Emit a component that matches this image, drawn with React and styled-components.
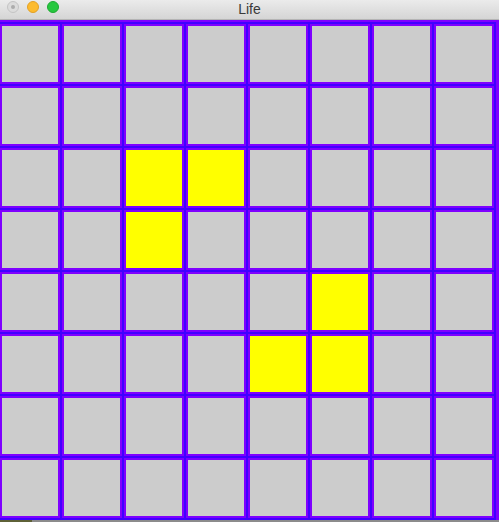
import React from 'react';
import styled, { createGlobalStyle } from 'styled-components';

const GlobalStyle = createGlobalStyle`
  html, body {
    margin: 0;
    padding: 0;
    background: #7f00ff;
    overflow: hidden;
  }
`;

const Window = styled.div`
  width: 499px;
  height: 522px;
  display: flex;
  flex-direction: column;
  background: #7f00ff;
  font-family: "Liberation Sans", Arial, sans-serif;
`;

const TitleBar = styled.div`
  height: 19px;
  flex: none;
  position: relative;
  display: flex;
  align-items: center;
  justify-content: center;
  background: linear-gradient(#ebebeb, #d5d5d5);
  border-bottom: 1px solid #b4b4b4;
`;

const Lights = styled.div`
  position: absolute;
  left: 7px;
  top: 1px;
  display: flex;
  gap: 8px;
`;

const Light = styled.span`
  width: 12px;
  height: 12px;
  border-radius: 50%;
  box-sizing: border-box;
  background: ${(p) => p.color};
  border: 1px solid ${(p) => p.edge};
  display: flex;
  align-items: center;
  justify-content: center;
`;

const Dot = styled.span`
  width: 4px;
  height: 4px;
  border-radius: 50%;
  background: #acacac;
`;

const Title = styled.span`
  font-size: 14px;
  color: #3a3a3a;
  margin-top: -1px;
`;

const Content = styled.div`
  flex: 1;
  padding-top: 2px;
  display: flex;
  flex-direction: column;
`;

const Grid = styled.div`
  width: 494px;
  display: grid;
  grid-template-columns: repeat(8, 60px);
  grid-auto-rows: 60px;
  gap: 2px;
  padding: 2px 2px 2px 0;
  background: #4000ff;
`;

const Cell = styled.div`
  box-sizing: border-box;
  border: 2px solid #7f00ff;
  background: ${(p) => (p.$alive ? '#ffff00' : '#cccccc')};
`;

const Desk = styled.div`
  flex: 1;
  background: linear-gradient(90deg, #5e6137 0 32px, #8c8c8c 32px 100%);
`;

const alive = new Set(['2-2', '2-3', '3-2', '4-5', '5-4', '5-5']);

const App = () => {
  const cells = [];
  for (let r = 0; r < 8; r++) {
    for (let c = 0; c < 8; c++) {
      cells.push(<Cell key={`${r}-${c}`} $alive={alive.has(`${r}-${c}`)} />);
    }
  }

  return (
    <Window>
      <GlobalStyle />
      <TitleBar>
        <Lights>
          <Light color="#dcdcdc" edge="#c4c4c4"><Dot /></Light>
          <Light color="#fdbb2e" edge="#e2a126" />
          <Light color="#27c83f" edge="#1ea932" />
        </Lights>
        <Title>Life</Title>
      </TitleBar>
      <Content>
        <Grid>{cells}</Grid>
        <Desk />
      </Content>
    </Window>
  );
};

export default App;
